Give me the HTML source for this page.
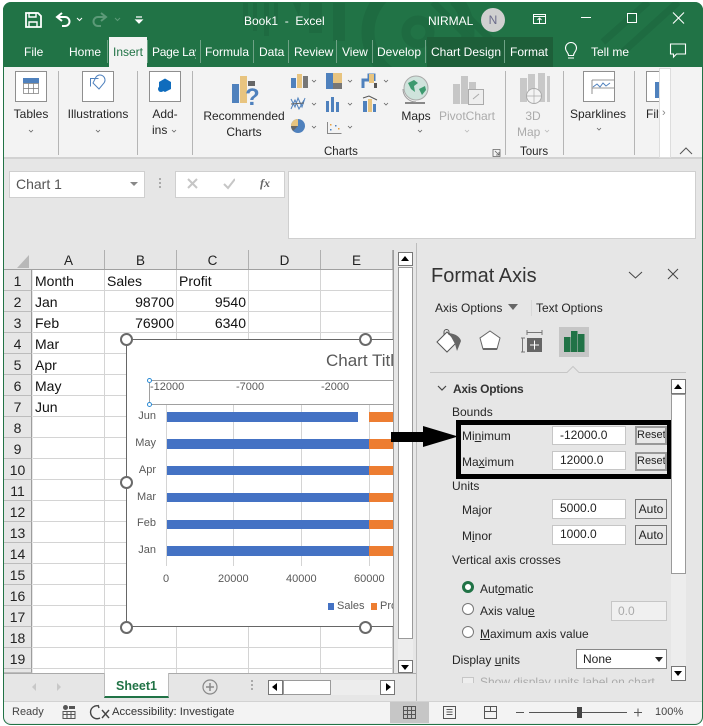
<!DOCTYPE html>
<html><head><meta charset="utf-8">
<style>
*{box-sizing:border-box}
html,body{margin:0;padding:0;width:703px;height:726px;overflow:hidden;background:#fff;font-family:"Liberation Sans",sans-serif}
#w{position:absolute;left:3px;top:2px;width:700px;height:723px;border-radius:8px 8px 8px 8px;overflow:hidden;background:#e6e6e6;border-left:1px solid #217346;border-bottom:1.5px solid #217346;border-right:1px solid #217346}
#r{position:absolute;left:0;top:0;width:703px;height:726px;overflow:hidden}
.a,.t{position:absolute}
.t{white-space:nowrap;line-height:16px;font-size:12.5px;color:#262626}
.r{text-align:right}.c{text-align:center}
.w{color:#fff}
.b{position:absolute;background:#fff;border:1px solid #ababab}
.g{color:#444}
.sep{position:absolute;width:1px;background:#b5b5b5;top:71px;height:84px}
.tb{position:absolute;width:1px;background:#6fa286;top:40px;height:23px}
.gh{position:absolute;background:#d4d4d4}
.rn{position:absolute;left:4px;width:28px;text-align:center;font-size:14px;line-height:23px;height:21px;color:#222;background:#e6e6e6;border-bottom:1px solid #bcbcbc;border-right:1px solid #9d9d9d;overflow:hidden}
.cell{position:absolute;font-size:14px;line-height:23px;white-space:nowrap;color:#111}
.ch{position:absolute;top:250px;height:20px;width:72px;text-align:center;font-size:13.5px;line-height:22px;color:#222;border-right:1px solid #b0b0b0}
.ax{position:absolute;font-size:11px;line-height:14px;color:#595959;white-space:nowrap}
.bar{position:absolute;left:167px;background:#4472c4}
.or{position:absolute;left:369px;width:25px;background:#ed7d31}
.h{position:absolute;width:13px;height:13px;border:2.5px solid #6a6a6a;border-radius:50%;background:#fff}
.in{position:absolute;left:552px;width:74px;height:19px;background:#fff;border:1px solid #c6c6c6;font-size:12px;line-height:17px;padding-left:7px;color:#222}
.bt{position:absolute;left:635px;width:32px;height:20px;background:#e8e8e8;border:1px solid #777;font-size:12px;line-height:18px;text-align:center;color:#222;white-space:nowrap;overflow:hidden}
.rad{position:absolute;left:462px;width:12px;height:12px;border-radius:50%;background:#fff;border:1px solid #777}
u{text-decoration-thickness:1px;text-underline-offset:1px}
</style></head><body>
<div id="w"></div>
<div id="r">
<!-- title bar -->
<div class="a" style="left:3px;top:2px;width:700px;height:65px;background:#217346;border-radius:8px 8px 0 0;overflow:hidden">
<svg width="700" height="65" style="position:absolute;left:0;top:0">
<g fill="#1e6b41"><rect x="240" y="1" width="5" height="22"/><rect x="250" y="1" width="4" height="28"/><rect x="261" y="1" width="5" height="33"/><rect x="271" y="1" width="4" height="20"/><rect x="306" y="1" width="13" height="30"/><rect x="330" y="1" width="12" height="38"/><path d="M290 1h8l-2 14z"/></g>
<circle cx="415" cy="30" r="50" fill="none" stroke="#1e6b41" stroke-width="13"/>
<circle cx="415" cy="30" r="12" fill="none" stroke="#1e6b41" stroke-width="9"/>
<path d="M600 40l45-40M620 50l55-50M430 0l60 60M450 0l60 60" stroke="#1e6b41" stroke-width="7" fill="none"/>
<rect x="424" y="35" width="126" height="30" fill="#1d5f39"/>
</svg>
</div>
<!-- QAT -->
<svg class="a" style="left:24px;top:10px" width="130" height="20" fill="none" stroke="#fff">
<path d="M2 3h12l3 3v11H2z" stroke-width="1.8"/><path d="M5 3h7v4H5zM5 17v-5h8v5" stroke-width="1.4"/>
<path d="M38 3l-5 4 5 4M33 7h8a4 4 0 0 1 0 9h-3" stroke-width="2"/><path d="M53 8l2.500 2.500L58 8" stroke-width="1"/>
<path d="M77 3l5 4-5 4M82 7h-8a4 4 0 0 0 0 9h3" stroke="#5c9a78" stroke-width="2"/><path d="M91 8l2.500 2.500L96 8" stroke="#5c9a78"/>
<path d="M112 7h6M112 10l3 3 3-3z" stroke-width="1.200" fill="#fff"/>
</svg>
<div class="t w" style="left:244px;top:13px;font-size:12px">Book1 &nbsp;- &nbsp;Excel</div>
<div class="t w" style="left:428px;top:13px;font-size:12px">NIRMAL</div>
<div class="a c" style="left:481px;top:8px;width:24px;height:24px;border-radius:50%;background:#d0d0d0;color:#6b6b8a;font-size:12px;line-height:24px">N</div>
<svg class="a" style="left:530px;top:8px" width="170" height="24" fill="none" stroke="#fff" stroke-width="1">
<rect x="3.500" y="6.500" width="12" height="9"/><path d="M3.500 8.500h12M9.500 15v-5M7.500 12l2-2 2 2"/>
<path d="M51 9.500h10"/>
<path d="M143 4.500l11 11M154 4.500l-11 11" stroke-width="1.100"/>
</svg>
<div class="a" style="left:627px;top:13px;width:10px;height:10px;border:1px solid #fff"></div>
<!-- tabs -->
<div class="a" style="left:109px;top:37px;width:38px;height:31px;background:#f3f3f3"></div>
<div class="t w" style="left:24px;top:44px;font-size:12px">File</div>
<div class="t w" style="left:69px;top:44px;font-size:12px">Home</div>
<div class="t" style="left:113px;top:44px;font-size:12px;color:#217346">Insert</div>
<div class="a" style="left:152px;top:40px;width:44px;height:24px;overflow:hidden"><div class="t w" style="left:0;top:4px;font-size:12px;letter-spacing:-.25px">Page Layout</div></div>
<div class="t w" style="left:205px;top:44px;font-size:12px">Formula</div>
<div class="t w" style="left:259px;top:44px;font-size:12px">Data</div>
<div class="t w" style="left:294px;top:44px;font-size:12px">Review</div>
<div class="t w" style="left:342px;top:44px;font-size:12px">View</div>
<div class="t w" style="left:377px;top:44px;font-size:12px">Develop</div>
<div class="t w" style="left:431px;top:44px;font-size:12px">Chart Design</div>
<div class="t w" style="left:510px;top:44px;font-size:12px">Format</div>
<div class="t w" style="left:591px;top:44px;font-size:12px">Tell me</div>
<div class="tb" style="left:107px"></div><div class="tb" style="left:147px"></div><div class="tb" style="left:200px"></div><div class="tb" style="left:253px"></div><div class="tb" style="left:288px"></div><div class="tb" style="left:336px"></div><div class="tb" style="left:372px"></div><div class="tb" style="left:425px"></div><div class="tb" style="left:504px"></div>
<svg class="a" style="left:560px;top:42px" width="130" height="20" fill="none" stroke="#fff" stroke-width="1.100">
<path d="M8 16h6M8.500 13.500c0-3-3-4-3-7.500a5.500 5.500 0 0 1 11 0c0 3.500-3 4.500-3 7.500z"/>
<path d="M110.500 2h15v10h-9l-3 3v-3h-3z"/></svg>
<!-- ribbon -->
<div class="a" style="left:4px;top:67px;width:698px;height:92px;background:#f3f3f3;border-bottom:2px solid #d2d2d2"></div>
<div class="b" style="left:15px;top:71px;width:32px;height:31px;border-color:#8f8f8f"></div>
<div class="b" style="left:82px;top:71px;width:32px;height:31px;border-color:#8f8f8f"></div>
<div class="b" style="left:149px;top:71px;width:32px;height:31px;border-color:#8f8f8f"></div>
<div class="b" style="left:583px;top:71px;width:32px;height:31px;border-color:#8f8f8f"></div>
<div class="b" style="left:646px;top:71px;width:13px;height:31px;border-color:#8f8f8f;border-right:0"></div>
<svg class="a" style="left:0;top:68px" width="703" height="90" fill="none">
<g stroke="#777" stroke-width=".7" fill="#fff"><rect x="23.500" y="10.500" width="15" height="15"/><path d="M23.500 15.500h15M23.500 20.500h15M28.500 15.500v10M33.500 15.500v10"/></g><rect x="23" y="10" width="16" height="5" fill="#4f81bd"/>
<path d="M90.500 18.500v-8h8M96 9a5 5 0 1 1 8 6l-5 6-6-6 3-6z" stroke="#4f81bd" stroke-width="1"/>
<path d="M159 14l6-3.500 6 3.500v7l-6 3-6-3z" fill="#0f6cbd"/><circle cx="161" cy="21" r="3" fill="#0f6cbd"/>
<rect x="232" y="16" width="7" height="19" fill="#4f81bd"/><rect x="240" y="8" width="7" height="27" fill="#e8c47f"/><rect x="248" y="13" width="7" height="5" fill="#666"/>
<text x="245" y="37" font-family="Liberation Sans" font-size="24" font-weight="bold" fill="#4f81bd">?</text>
<g fill="#4f81bd"><rect x="291" y="10" width="5" height="10"/><rect x="303" y="7" width="1" height="0"/><rect x="326" y="5" width="7" height="16"/><rect x="326" y="33" width="3" height="11"/><rect x="331" y="29" width="3" height="15"/><rect x="336" y="34" width="3" height="10"/></g>
<rect x="297" y="6" width="5" height="14" fill="#e8c47f"/><rect x="303" y="8" width="5" height="12" fill="#777"/><rect x="333" y="5" width="9" height="10" fill="#e8c47f"/><rect x="333" y="15" width="9" height="6" fill="#777"/>
<path d="M291 31l4 8 3-9 4 9 3-9M291 41l4-9 4 9 5-9" stroke="#4f81bd"/><path d="M291 36l13-1" stroke="#666"/>
<circle cx="298" cy="58" r="7" fill="#4f81bd"/><path d="M298 58v-7a7 7 0 0 0-7 7z" fill="#e8c47f"/><path d="M298 58h-7a7 7 0 0 0 2 5z" fill="#666"/>
<path d="M327.500 54v11.500h14" stroke="#888"/><g fill="#4f81bd"><rect x="330" y="61" width="1.500" height="1.500"/><rect x="335" y="57" width="1.500" height="1.500"/></g><g fill="#e8a040"><rect x="330" y="56" width="1.500" height="1.500"/><rect x="338" y="60" width="1.500" height="1.500"/></g>
<path d="M363 20v-8h6V7h5v6" stroke="#4f81bd" stroke-width="3"/><rect x="369" y="6" width="5" height="9" fill="#e8c47f"/><rect x="374" y="15" width="3" height="5" fill="#555"/>
<rect x="363" y="33" width="4" height="11" fill="#4f81bd"/><rect x="368" y="31" width="4" height="13" fill="#e8c47f"/><rect x="373" y="36" width="3" height="8" fill="#4f81bd"/><path d="M363 30l6-2 8 4" stroke="#555"/>
<circle cx="416" cy="20" r="12" fill="#cfe3dc" stroke="#aaa"/><path d="M408 15l6-3 4 3-4 3 1 6-4-3zM419 21l6-3 1 4-4 5z" fill="#3d9a6f"/><path d="M405 35h20" stroke="#888" stroke-width="2"/><path d="M403 21a13 13 0 0 0 13 13" stroke="#999"/>
<g fill="#c6c6c6"><rect x="453" y="16" width="7" height="20"/><rect x="461" y="8" width="7" height="28"/><rect x="469" y="14" width="7" height="8"/></g><rect x="468.500" y="21.500" width="15" height="15" fill="#eee" stroke="#aaa"/><path d="M473 31l6-5" stroke="#aaa"/>
<g fill="#c8c8c8"><rect x="520" y="10" width="7" height="24"/><rect x="528" y="6" width="7" height="28"/><rect x="538" y="5" width="7" height="29"/><rect x="547" y="8" width="3" height="26"/></g><circle cx="534" cy="28" r="7.500" fill="#f3f3f3" stroke="#aaa"/><path d="M526.500 28h15M534 20.500v15" stroke="#aaa" stroke-width=".7"/>
<path d="M592 20h22M592 12h22M592 12v14" stroke="#777" stroke-width=".8"/><path d="M593 19l4-3 3 3 3-4 3 3 4-3" stroke="#4f81bd"/>
<rect x="655" y="14" width="4" height="16" fill="#4f81bd"/>
<g stroke="#666" stroke-width=".8"><path d="M29 62l2 2 2-2M96 62l2 2 2-2M172 62l2 2 2-2M312 12l2 2 2-2M312 35l2 2 2-2M312 58l2 2 2-2M418 62l2 2 2-2M597 60l2 2 2-2M348 12l2 2 2-2M348 35l2 2 2-2M348 58l2 2 2-2M384 12l2 2 2-2M384 35l2 2 2-2"/><path d="M465 62l2 2 2-2M545 62l2 2 2-2" stroke="#bbb"/></g>
<path d="M493 81.500h7v7h-7zM495 83l4 4M499 84v3h-3" stroke="#666" stroke-width=".8"/>
<path d="M680 86l6-6 6 6" stroke="#555"/>
</svg>
<div class="sep" style="left:58px"></div><div class="sep" style="left:137px"></div><div class="sep" style="left:192px"></div><div class="sep" style="left:505px"></div><div class="sep" style="left:563px"></div><div class="sep" style="left:634px"></div>
<div class="t c" style="left:11px;top:106px;width:40px;font-size:12px">Tables</div>
<div class="t c" style="left:62px;top:106px;width:72px;font-size:12px">Illustrations</div>
<div class="t c" style="left:143px;top:106px;width:44px;font-size:12px">Add-</div>
<div class="t" style="left:152px;top:122px;font-size:12px">ins</div>
<div class="t c" style="left:198px;top:108px;width:92px;font-size:12px">Recommended</div>
<div class="t c" style="left:198px;top:124px;width:92px;font-size:12px">Charts</div>
<div class="t c" style="left:395px;top:108px;width:42px;font-size:12px">Maps</div>
<div class="t c" style="left:435px;top:108px;width:64px;font-size:12px;color:#ababab">PivotChart</div>
<div class="t c" style="left:515px;top:108px;width:36px;font-size:12px;color:#ababab">3D</div>
<div class="t" style="left:517px;top:124px;font-size:12px;color:#ababab">Map</div>
<div class="t c" style="left:568px;top:106px;width:60px;font-size:12px">Sparklines</div>
<div class="t" style="left:646px;top:106px;font-size:12px;width:13px;overflow:hidden">Filters</div>
<div class="a" style="left:659px;top:68px;width:12px;height:90px;background:#fff;border:1px solid #ddd"></div>
<div class="t" style="left:662px;top:105px;font-size:11px;color:#888">›</div>
<div class="t" style="left:324px;top:144px;font-size:11.500px">Charts</div>
<div class="t" style="left:520px;top:144px;font-size:11.500px">Tours</div>
<!-- formula area -->
<div class="b" style="left:9px;top:171px;width:136px;height:27px;border-color:#cfcfcf"></div>
<div class="t" style="left:16px;top:176px;font-size:14px;color:#555">Chart 1</div>
<div class="a" style="left:130px;top:182px;border:4px solid transparent;border-top:4px solid #888;border-left-width:4px"></div>
<div class="a" style="left:159px;top:178px;width:2px;height:11px;background:repeating-linear-gradient(#aaa 0 2px,transparent 2px 4px)"></div>
<div class="b" style="left:175px;top:171px;width:110px;height:27px;border-color:#cfcfcf"></div>
<svg class="a" style="left:185px;top:174px" width="50" height="20" fill="none" stroke="#c6c6c6" stroke-width="2"><path d="M3 5l9 9M12 5l-9 9M39 10l4 4 7-9"/></svg>
<div class="t" style="left:260px;top:175px;font-size:12px;font-style:italic;font-family:'Liberation Serif',serif;color:#666;font-weight:bold">fx</div>
<div class="b" style="left:288px;top:171px;width:408px;height:68px;border-color:#cfcfcf"></div>
<!-- grid -->
<div class="a" style="left:33px;top:270px;width:361px;height:403px;background:#fff;overflow:hidden;background-image:linear-gradient(#d4d4d4 1px,transparent 1px),linear-gradient(90deg,#d4d4d4 1px,transparent 1px);background-size:72px 21px;background-position:-1px 20px;border-right:1px solid #9d9d9d"></div>
<svg class="a" style="left:16px;top:254px" width="14" height="15"><path d="M13 1v13H1z" fill="#b8b8b8"/></svg>
<div class="ch" style="left:33px">A</div><div class="ch" style="left:105px">B</div><div class="ch" style="left:177px">C</div><div class="ch" style="left:249px">D</div><div class="ch" style="left:321px">E</div>
<div class="a" style="left:4px;top:269px;width:390px;height:1px;background:#a0a0a0"></div>
<div class="rn" style="top:270px">1</div><div class="rn" style="top:291px">2</div><div class="rn" style="top:312px">3</div><div class="rn" style="top:333px">4</div><div class="rn" style="top:354px">5</div><div class="rn" style="top:375px">6</div><div class="rn" style="top:396px">7</div><div class="rn" style="top:417px">8</div><div class="rn" style="top:438px">9</div><div class="rn" style="top:459px">10</div><div class="rn" style="top:480px">11</div><div class="rn" style="top:501px">12</div><div class="rn" style="top:522px">13</div><div class="rn" style="top:543px">14</div><div class="rn" style="top:564px">15</div><div class="rn" style="top:585px">16</div><div class="rn" style="top:606px">17</div><div class="rn" style="top:627px">18</div><div class="rn" style="top:648px">19</div>
<div class="rn" style="top:669px;height:4px"></div>
<div class="cell" style="left:35px;top:270px">Month</div><div class="cell" style="left:107px;top:270px">Sales</div><div class="cell" style="left:179px;top:270px">Profit</div>
<div class="cell" style="left:35px;top:291px">Jan</div><div class="cell r" style="left:105px;top:291px;width:69px">98700</div><div class="cell r" style="left:177px;top:291px;width:69px">9540</div>
<div class="cell" style="left:35px;top:312px">Feb</div><div class="cell r" style="left:105px;top:312px;width:69px">76900</div><div class="cell r" style="left:177px;top:312px;width:69px">6340</div>
<div class="cell" style="left:35px;top:333px">Mar</div><div class="cell" style="left:35px;top:354px">Apr</div><div class="cell" style="left:35px;top:375px">May</div><div class="cell" style="left:35px;top:396px">Jun</div>
<!-- chart -->
<div class="a" style="left:126px;top:339px;width:268px;height:288px;background:#fff;border:1px solid #666;border-width:1.500px 0 1.500px 1.500px"></div>
<div class="a" style="left:326px;top:350px;width:68px;height:22px;overflow:hidden"><div class="t" style="left:0;top:1px;font-size:17px;line-height:20px;color:#595959">Chart Title</div></div>
<div class="a" style="left:149px;top:380px;width:245px;height:25px;border:1px solid #a0a0a0;border-right:0"></div>
<div class="a" style="left:147px;top:378px;width:5px;height:5px;border:1px solid #2a8ad4;border-radius:50%;background:#fff"></div>
<div class="a" style="left:147px;top:402px;width:5px;height:5px;border:1px solid #2a8ad4;border-radius:50%;background:#fff"></div>
<div class="ax" style="left:150px;top:380px">-12000</div><div class="ax" style="left:236px;top:380px">-7000</div><div class="ax" style="left:321px;top:380px">-2000</div>
<div class="gh" style="left:166px;top:405px;width:1px;height:161px"></div><div class="gh" style="left:233px;top:405px;width:1px;height:161px"></div><div class="gh" style="left:301px;top:405px;width:1px;height:161px"></div><div class="gh" style="left:369px;top:405px;width:1px;height:161px"></div>
<div class="bar" style="top:412px;height:10px;width:191px"></div><div class="or" style="top:412px;height:10px"></div>
<div class="bar" style="top:439px;height:10px;width:202px"></div><div class="or" style="top:439px;height:10px"></div>
<div class="bar" style="top:466px;height:9px;width:202px"></div><div class="or" style="top:466px;height:9px"></div>
<div class="bar" style="top:493px;height:9px;width:202px"></div><div class="or" style="top:493px;height:9px"></div>
<div class="bar" style="top:520px;height:9px;width:202px"></div><div class="or" style="top:520px;height:9px"></div>
<div class="bar" style="top:546px;height:10px;width:202px"></div><div class="or" style="top:546px;height:10px"></div>
<div class="ax r" style="left:120px;width:36px;top:409px">Jun</div><div class="ax r" style="left:120px;width:36px;top:436px">May</div><div class="ax r" style="left:120px;width:36px;top:463px">Apr</div><div class="ax r" style="left:120px;width:36px;top:490px">Mar</div><div class="ax r" style="left:120px;width:36px;top:516px">Feb</div><div class="ax r" style="left:120px;width:36px;top:543px">Jan</div>
<div class="ax" style="left:163px;top:572px">0</div><div class="ax" style="left:218px;top:572px">20000</div><div class="ax" style="left:286px;top:572px">40000</div><div class="ax" style="left:354px;top:572px">60000</div>
<div class="a" style="left:328px;top:603px;width:6px;height:7px;background:#4472c4"></div><div class="ax" style="left:337px;top:599px">Sales</div>
<div class="a" style="left:371px;top:603px;width:6px;height:7px;background:#ed7d31"></div>
<div class="a" style="left:380px;top:599px;width:14px;height:14px;overflow:hidden"><div class="ax" style="left:0;top:0">Profit</div></div>
<div class="a" style="left:393px;top:250px;width:1px;height:423px;background:#9d9d9d"></div>
<div class="h" style="left:120px;top:333px"></div><div class="h" style="left:359px;top:333px"></div><div class="h" style="left:120px;top:476px"></div><div class="h" style="left:120px;top:621px"></div><div class="h" style="left:359px;top:621px"></div>
<!-- v scroll -->
<div class="a" style="left:394px;top:250px;width:22px;height:423px;background:#e6e6e6"></div>
<div class="a" style="left:398px;top:252px;width:15px;height:421px;background:#ededed"></div>
<div class="b" style="left:398px;top:252px;width:15px;height:14px;border-color:#777"></div>
<div class="a" style="left:401px;top:256px;border:4.500px solid transparent;border-bottom:5px solid #000;border-top:0"></div>
<div class="b" style="left:398px;top:267px;width:15px;height:372px;border-color:#9a9a9a"></div>
<div class="b" style="left:398px;top:660px;width:15px;height:13px;border-color:#777"></div>
<div class="a" style="left:401px;top:665px;border:4.500px solid transparent;border-top:5px solid #000;border-bottom:0"></div>
<!-- tab strip -->
<div class="a" style="left:4px;top:673px;width:412px;height:28px;background:#e6e6e6;border-top:1px solid #aaa"></div>
<div class="a" style="left:104px;top:673px;width:65px;height:25px;background:#fff;border-bottom:2px solid #217346;border-left:1px solid #bbb;border-right:1px solid #bbb"></div>
<div class="t c" style="left:104px;top:678px;width:65px;font-size:12.500px;font-weight:bold;color:#217346">Sheet1</div>
<svg class="a" style="left:25px;top:678px" width="230" height="18" fill="none"><path d="M11 5l-4 4 4 4z" fill="#c8c8c8"/><path d="M32 5l4 4-4 4z" fill="#c8c8c8"/><circle cx="185" cy="9" r="7" stroke="#888" stroke-width="1.200"/><path d="M181 9h8M185 5v8" stroke="#888" stroke-width="1.500"/></svg>
<div class="a" style="left:251px;top:680px;width:2px;height:12px;background:repeating-linear-gradient(#aaa 0 2px,transparent 2px 4px)"></div>
<div class="a" style="left:268px;top:680px;width:127px;height:15px;background:#ededed"></div>
<div class="b" style="left:268px;top:680px;width:15px;height:15px;border-color:#777"></div>
<div class="a" style="left:272px;top:683px;border:4.500px solid transparent;border-right:5px solid #000;border-left:0"></div>
<div class="b" style="left:283px;top:680px;width:48px;height:15px;border-color:#9a9a9a"></div>
<div class="b" style="left:380px;top:680px;width:15px;height:15px;border-color:#777"></div>
<div class="a" style="left:386px;top:683px;border:4.500px solid transparent;border-left:5px solid #000;border-right:0"></div>
<!-- status bar -->
<div class="a" style="left:4px;top:701px;width:698px;height:22px;background:#f3f3f3;border-top:1px solid #d2d2d2;border-radius:0 0 8px 8px"></div>
<div class="t" style="left:12px;top:704px;font-size:11px;color:#444">Ready</div>
<svg class="a" style="left:62px;top:704px" width="50" height="16" fill="none"><rect x="1" y="1" width="5" height="5" rx="2.500" fill="#555"/><path d="M1 7.500h12v7H1zM1 10.500h12M5 7.500v7M9 7.500v7" stroke="#555"/><path d="M7 2h6v3H7z" fill="#555"/><path d="M37 2a6.500 6.500 0 1 0 1 12M36 1l1 3M40 6l7 8M47 6l-7 8" stroke="#444" stroke-width="1.400"/></svg>
<div class="t" style="left:112px;top:704px;font-size:11.300px;color:#333">Accessibility: Investigate</div>
<div class="a" style="left:390px;top:702px;width:39px;height:21px;background:#c6c6c6"></div>
<svg class="a" style="left:400px;top:704px" width="280" height="18" fill="none" stroke="#555"><path d="M3.500 2.500h12v12h-12zM3.500 6.500h12M3.500 10.500h12M7.500 2.500v12M11.500 2.500v12"/><path d="M43.500 2.500h12v12h-12zM46.500 5.500h6M46.500 8h6M46.500 10.500h6"/><path d="M84.500 2.500h12v12h-12zM84.500 7.500h12M90.500 2.500v5"/><path d="M116 8.500h8M129 8.500h98M234 8.500h8M238 4.500v8"/><rect x="177" y="3" width="5" height="11" fill="#444" stroke="none"/></svg>
<div class="t" style="left:655px;top:704px;font-size:11px;color:#444">100%</div>
<!-- panel -->
<div class="a" style="left:416px;top:243px;width:1px;height:458px;background:#bdbdbd"></div>
<div class="t" style="left:431px;top:264px;font-size:20px;line-height:24px;color:#333">Format Axis</div>
<svg class="a" style="left:626px;top:266px" width="60" height="18" fill="none" stroke="#444"><path d="M3 6l6.500 6L16 6M42 3l10 10M52 3L42 13"/></svg>
<div class="t" style="left:435px;top:300px;font-size:12px">Axis Options</div>
<div class="a" style="left:508px;top:304px;border:5px solid transparent;border-top:6px solid #666;border-bottom:0"></div>
<div class="a" style="left:531px;top:300px;width:1px;height:16px;background:#d8d8d8"></div>
<div class="t" style="left:536px;top:300px;font-size:12px">Text Options</div>
<div class="a" style="left:559px;top:327px;width:30px;height:30px;background:#c6c6c6"></div>
<svg class="a" style="left:430px;top:326px" width="165" height="50" fill="none">
<path d="M7 16l10-10 10 10-10 10z" fill="#fff" stroke="#555"/><path d="M19 7C26 8 30 11 31 15L27 25L25 18z" fill="#666"/><path d="M14 9V6a2 2 0 0 1 5 0v3" stroke="#555"/>
<path d="M60 5l10 7-3 11H53l-3-11z" fill="#fff" stroke="#666"/><path d="M53 23h14" stroke="#666" stroke-width="2"/>
<path d="M97 6.500h15M97 4v5M112 4v5M92.500 12v14M91 12h4M91 26h4" stroke="#777"/><rect x="97" y="12" width="15" height="14" fill="#666"/><path d="M104.500 14.500v9M100 19h9" stroke="#fff"/>
<rect x="134" y="11" width="6.500" height="15" fill="#217346"/><rect x="141" y="5" width="6.500" height="21" fill="#217346"/><rect x="148" y="8" width="6.500" height="18" fill="#217346"/>
</svg>
<svg class="a" style="left:430px;top:362px" width="256" height="14" fill="none" stroke="#c6c6c6"><path d="M0 10.500h137l6-6 6 6h107"/></svg>
<svg class="a" style="left:436px;top:384px" width="14" height="10" fill="none" stroke="#444" stroke-width="1.200"><path d="M2 2l4 4 4-4"/></svg>
<div class="t" style="left:453px;top:381px;font-size:12px;font-weight:bold;color:#333;letter-spacing:-.3px">Axis Options</div>
<div class="t" style="left:452px;top:404px;font-size:12px">Bounds</div>
<div class="a" style="left:456px;top:420px;width:216px;height:59px;border:5px solid #000"></div>
<div class="a" style="left:391px;top:432px;width:34px;height:10px;background:#000"></div>
<svg class="a" style="left:422px;top:425px" width="38" height="23"><path d="M1 1l35 10.500L1 22z" fill="#000"/></svg>
<div class="t" style="left:462px;top:428px;font-size:12px">Mi<u>n</u>imum</div>
<div class="t" style="left:462px;top:454px;font-size:12px">Ma<u>x</u>imum</div>
<div class="in" style="top:426px">-12000.0</div><div class="in" style="top:451px">12000.0</div>
<div class="bt" style="top:426px;height:19px;width:32px;border:2px solid #999;line-height:15px;font-size:11px">Reset</div><div class="bt" style="top:452px;height:19px;width:32px;border:2px solid #999;line-height:15px;font-size:11px">Reset</div>
<div class="t" style="left:452px;top:478px;font-size:12px">Units</div>
<div class="t" style="left:462px;top:502px;font-size:12px">Major</div>
<div class="t" style="left:462px;top:528px;font-size:12px">M<u>i</u>nor</div>
<div class="in" style="top:499px;height:20px">5000.0</div><div class="in" style="top:525px;height:20px">1000.0</div>
<div class="bt" style="top:499px">Auto</div><div class="bt" style="top:525px">Auto</div>
<div class="t" style="left:452px;top:552px;font-size:12px">Vertical axis crosses</div>
<div class="rad" style="top:581px;border:3.500px solid #217346"></div>
<div class="t" style="left:480px;top:581px;font-size:12px">Aut<u>o</u>matic</div>
<div class="rad" style="top:603px"></div>
<div class="t" style="left:480px;top:603px;font-size:12px">Axis valu<u>e</u></div>
<div class="a" style="left:611px;top:601px;width:56px;height:20px;background:#f0f0f0;border:1px solid #c6c6c6;font-size:12px;line-height:18px;padding-left:6px;color:#aaa">0.0</div>
<div class="rad" style="top:626px"></div>
<div class="t" style="left:480px;top:626px;font-size:12px"><u>M</u>aximum axis value</div>
<div class="t" style="left:452px;top:652px;font-size:12px">Display <u>u</u>nits</div>
<div class="a" style="left:576px;top:649px;width:91px;height:20px;background:#fff;border:1px solid #888;font-size:12px;line-height:18px;padding-left:6px;color:#222">None</div>
<div class="a" style="left:655px;top:657px;border:4.500px solid transparent;border-top:5px solid #222;border-bottom:0"></div>
<div class="a" style="left:462px;top:676px;width:210px;height:7px;overflow:hidden"><div class="a" style="left:0;top:1px;width:12px;height:12px;background:#eee;border:1px solid #c6c6c6"></div><div class="t" style="left:18px;top:-2px;font-size:12px;color:#aaa">Show display units label on chart</div></div>
<div class="a" style="left:671px;top:379px;width:15px;height:302px;background:#ededed"></div>
<div class="b" style="left:671px;top:379px;width:15px;height:15px;border-color:#777"></div>
<div class="a" style="left:674px;top:384px;border:4.500px solid transparent;border-bottom:5px solid #000;border-top:0"></div>
<div class="b" style="left:671px;top:394px;width:15px;height:180px;border-color:#9a9a9a"></div>
<div class="b" style="left:671px;top:666px;width:15px;height:15px;border-color:#777"></div>
<div class="a" style="left:674px;top:671px;border:4.500px solid transparent;border-top:5px solid #000;border-bottom:0"></div>
</div>
</body></html>
